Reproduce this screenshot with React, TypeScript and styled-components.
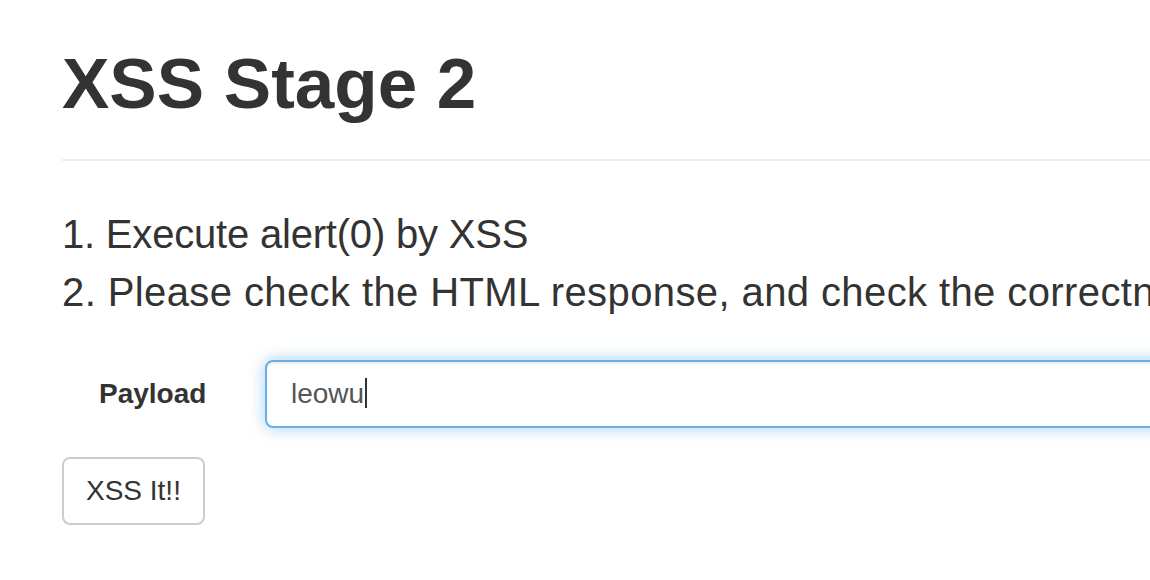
import React from "react";
import styled, { createGlobalStyle } from "styled-components";

const Global = createGlobalStyle`
  html, body {
    margin: 0;
    padding: 0;
    background: #fff;
    overflow: hidden;
  }
  body {
    font-family: "Liberation Sans", Arial, sans-serif;
    color: #333;
  }
`;

const Container = styled.div`
  width: 1400px;
  padding-left: 62px;
  box-sizing: border-box;
`;

const PageHeader = styled.div`
  margin-top: 45px;
  padding-bottom: 37px;
  border-bottom: 2px solid #eee;
`;

const Title = styled.h1`
  margin: 0;
  font-size: 71px;
  line-height: 77px;
  font-weight: 700;
  color: #333;
`;

const Lead = styled.p`
  margin: 44px 0 0;
  font-size: 40px;
  line-height: 58px;
  font-weight: 400;
  white-space: nowrap;
  letter-spacing: -0.2px;
`;

const LeadLine = styled.span<{ $spacing?: number }>`
  display: block;
  letter-spacing: ${(p) => (p.$spacing ?? -0.2)}px;
`;

const FormRow = styled.div`
  display: flex;
  align-items: center;
  margin-top: 39px;
`;

const Label = styled.label`
  width: 143px;
  padding-left: 37px;
  font-size: 28px;
  line-height: 40px;
  font-weight: 700;
  color: #333;
  box-sizing: border-box;
`;

const Field = styled.div`
  position: relative;
  margin-left: 60px;
  flex: 1;
`;

const Input = styled.input`
  display: block;
  width: 100%;
  height: 68px;
  box-sizing: border-box;
  padding: 12px 24px;
  font-family: "Liberation Sans", Arial, sans-serif;
  font-size: 28px;
  line-height: 40px;
  color: #555;
  background: #fff;
  border: 2px solid #66afe9;
  border-radius: 8px;
  outline: none;
  box-shadow: inset 0 2px 2px rgba(0, 0, 0, 0.075), 0 0 16px rgba(102, 175, 233, 0.6);
`;

const Caret = styled.span`
  position: absolute;
  left: 100px;
  top: 18px;
  width: 2px;
  height: 30px;
  background: #333;
`;

const Button = styled.button`
  display: block;
  margin-top: 29px;
  height: 68px;
  padding: 12px 22px;
  box-sizing: border-box;
  font-family: "Liberation Sans", Arial, sans-serif;
  font-size: 28px;
  line-height: 40px;
  color: #333;
  background: #fff;
  border: 2px solid #ccc;
  border-radius: 8px;
  cursor: pointer;
`;

export default function App() {
  return (
    <>
      <Global />
      <Container>
        <PageHeader>
          <Title>XSS Stage 2</Title>
        </PageHeader>
        <Lead>
          <LeadLine>1. Execute alert(0) by XSS</LeadLine>
          <LeadLine $spacing={0.4}>
            2. Please check the HTML response, and check the correctness of your payload.
          </LeadLine>
        </Lead>
        <form onSubmit={(e) => e.preventDefault()}>
          <FormRow>
            <Label htmlFor="payload">Payload</Label>
            <Field>
              <Input id="payload" defaultValue="leowu" />
              <Caret />
            </Field>
          </FormRow>
          <Button type="submit">XSS It!!</Button>
        </form>
      </Container>
    </>
  );
}
